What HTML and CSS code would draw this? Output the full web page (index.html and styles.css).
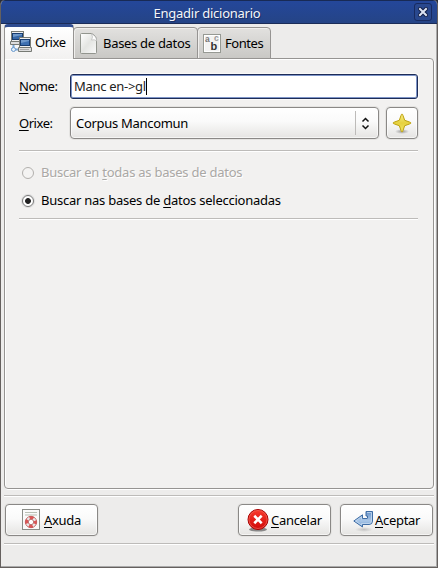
FILE: index.html
```html
<!DOCTYPE html>
<html lang="gl">
<head>
<meta charset="utf-8">
<title>Engadir dicionario</title>
<link rel="stylesheet" href="styles.css">
</head>
<body>
<main class="window">
  <header class="titlebar">
    <h1>Engadir dicionario</h1>
    <button class="close" aria-label="Pechar"><svg width="10" height="10" viewBox="0 0 10 10"><path d="M2 2l6 6M8 2L2 8" stroke="#101d46" stroke-width="4" stroke-linecap="square"/><path d="M2 2l6 6M8 2L2 8" stroke="#dde4f3" stroke-width="2" stroke-linecap="square"/></svg></button>
  </header>
  <nav class="tabs">
    <div class="tab active">
      <svg width="22" height="22" viewBox="0 0 22 22">
        <g stroke="#777a74"><rect x="1.500" y=".5" width="12" height="10" fill="#eee"/><path d="M.5 10.500h13v3H.5z" fill="#ddd"/></g>
        <rect x="2.500" y="2.500" width="10" height="6" fill="#3768a8" stroke="#173c70"/>
        <path d="M3.500 14v3M1 18.500h7" stroke="#79a6d4" stroke-width="2" fill="none"/>
        <circle cx="3.500" cy="18.500" r="2" fill="#e5f1fc" stroke="#6b9acb"/>
        <g stroke="#777a74"><rect x="9.500" y="6.500" width="11" height="10" fill="#eee"/><path d="M8.500 16.500h13v4h-13z" fill="#ddd"/></g>
        <rect x="10.500" y="8.500" width="9" height="6" fill="#3e70b1" stroke="#173c70"/>
        <path d="M11 12l8-2V9h-8zM3 6l9-2V3H3z" fill="#6f99cb"/>
        <path d="M10 18.500h9" stroke="#aaa"/>
      </svg>
      <span>Orixe</span>
    </div>
    <div class="tab bases">
      <svg width="20" height="22" viewBox="0 0 20 22"><defs><linearGradient id="pg" x2="1" y2="1"><stop stop-color="#fff"/><stop offset=".5" stop-color="#e4e5e2"/><stop offset="1" stop-color="#fafafa"/></linearGradient></defs><path d="M2.500.5h10q5 2 5 7v12q0 1-1 1h-14q-1 0-1-1v-18q0-1 1-1z" fill="url(#pg)" stroke="#92958e"/><path d="M12.500 1q2 3 0 6 3-1 5 1 0-5-5-7z" fill="#fff" stroke="#bbb" stroke-width=".7"/></svg>
      <span>Bases de datos</span>
    </div>
    <div class="tab fonts">
      <svg width="18" height="19" viewBox="0 0 18 19"><rect x=".5" y=".5" width="17" height="18" fill="#f3f3f2" stroke="#969993"/><rect x="1.500" y="1.500" width="15" height="16" fill="none" stroke="#fff"/><g class="letters"><text x="2" y="8" fill="#777">a</text><text x="11" y="7" fill="#999">c</text><text x="7.500" y="15.500" class="letter-b">b</text></g></svg>
      <span>Fontes</span>
    </div>
  </nav>
  <section class="panel">
    <div class="row name"><label for="name"><u>N</u>ome:</label><div class="entry" id="name"><span>Manc en-&gt;gl</span><i class="caret"></i></div></div>
    <div class="row source"><label><u>O</u>rixe:</label>
      <div class="button combo"><span>Corpus Mancomun</span><div class="arrows"><svg width="9" height="13" viewBox="0 0 9 13"><path d="M1.500 4.500l3-3 3 3M1.500 8.500l3 3 3-3" fill="none" stroke="#111" stroke-width="1.500"/></svg></div></div>
      <button class="button star"><svg width="22" height="22" viewBox="0 0 22 22"><defs><linearGradient id="st" x2="0" y2="1"><stop stop-color="#f8ef89"/><stop offset=".5" stop-color="#e6d13d"/><stop offset="1" stop-color="#f2e66c"/></linearGradient><radialGradient id="sh"><stop stop-color="#999"/><stop offset="1" stop-color="#999" stop-opacity="0"/></radialGradient></defs><ellipse cx="11" cy="19.500" rx="7" ry="2.500" fill="url(#sh)"/><path d="M11 2q.6 0 1 1.500l1.700 4.800 4.800 1.700q1.500.5 1.500 1t-1.500 1l-4.800 1.700-1.700 4.800q-.4 1.500-1 1.500t-1-1.500l-1.700-4.800L3.500 12Q2 11.500 2 11t1.500-1l4.800-1.700L10 3.500Q10.400 2 11 2z" fill="url(#st)" stroke="#bda10e"/></svg></button>
    </div>
    <hr>
    <div class="radio disabled"><i></i><span>Buscar en <u>t</u>odas as bases de datos</span></div>
    <div class="radio selected"><i></i><span>Buscar nas bases de <u>d</u>atos seleccionadas</span></div>
    <hr class="last">
  </section>
  <footer class="actions">
    <button class="button help"><svg width="18" height="22" viewBox="0 0 18 22"><rect x=".5" y=".5" width="17" height="20" fill="#fafafa" stroke="#8b8d88"/><path d="M3 3.500h12M3 6h12" stroke="#b9bfb4"/><circle cx="9" cy="13" r="4.300" fill="none" stroke="#e8e8e8" stroke-width="3"/><circle cx="9" cy="13" r="4.300" fill="none" stroke="#dc5555" stroke-width="2.800" stroke-dasharray="4 2.754" stroke-dashoffset="2"/><circle cx="9" cy="13" r="5.700" fill="none" stroke="#b44" stroke-width=".7"/><circle cx="9" cy="13" r="2.700" fill="#fff" stroke="#a55" stroke-width=".8"/></svg><span><u>A</u>xuda</span></button>
    <button class="button cancel"><svg width="22" height="23" viewBox="0 0 22 23"><defs><linearGradient id="rd" x2="0" y2="1"><stop stop-color="#fa3a2c"/><stop offset="1" stop-color="#cf0909"/></linearGradient></defs><ellipse cx="11" cy="20.500" rx="9" ry="2" fill="#888"/><circle cx="11" cy="10.500" r="10" fill="url(#rd)" stroke="#a50000"/><circle cx="11" cy="10.500" r="9" fill="none" stroke="#f06458" stroke-width=".7"/><path d="M8.200 7.700l5.600 5.600M13.800 7.700l-5.600 5.600" stroke="#fff" stroke-width="2.600" stroke-linecap="square"/></svg><span><u>C</u>ancelar</span></button>
    <button class="button accept"><svg width="21" height="22" viewBox="0 0 21 22"><defs><linearGradient id="bl" x2="0" y2="1"><stop stop-color="#6692c9"/><stop offset=".6" stop-color="#a9c6e7"/><stop offset="1" stop-color="#739fd1"/></linearGradient></defs><ellipse cx="11" cy="19.500" rx="9" ry="2.500" fill="url(#sh)" opacity=".5"/><path d="M13 1.500h6.500V11q0 3.500-3.500 3.500H9.500V17L.8 11 9.500 4.800v3.700H14q.5 0 .5-.5V6H13z" fill="url(#bl)" stroke="#3e6ca4"/><path d="M14 2.500h4.500V11q0 2.500-2.500 2.500H8.500V15L2.600 11l5.900-4.200v2.700" fill="none" stroke="#c6daf0" stroke-width=".8"/></svg><span><u>A</u>ceptar</span></button>
  </footer>
</main>
</body>
</html>
```
FILE: styles.css
```css
* { box-sizing: border-box; }
body { margin: 0; background: #282d3a; font: 13px/18px "Noto Sans", "Open Sans", sans-serif; letter-spacing: -0.3px; color: #000; }
button { font: inherit; letter-spacing: inherit; color: inherit; padding: 0; margin: 0; }
svg { display: block; flex: none; }
span { white-space: nowrap; }
u { text-decoration: underline; text-decoration-thickness: 1px; text-underline-offset: 2px; text-decoration-skip-ink: none; }
.window { width: 438px; height: 568px; display: flex; flex-direction: column; background: #edeceb; border: 1px solid #65605e; border-top: 0; border-radius: 5px 5px 0 0; overflow: hidden; box-shadow: inset -1px -1px #aaa; }
.titlebar { height: 24px; flex: none; display: flex; align-items: center; margin: 0 -1px; background: linear-gradient(#24479a, #254486); border-top: 1px solid #182a55; border-bottom: 1px solid #1b2c58; color: #f4f6fa; text-shadow: 1px 1px #182f67; }
h1 { flex: 1; margin: 2px 0 0; padding-left: 0; text-align: center; font: inherit; line-height: 20px; letter-spacing: -0.25px; }
.close { width: 18px; height: 18px; display: flex; align-items: center; justify-content: center; border: 1px solid #182b60; border-radius: 3px; background: #29488e; margin: 0 6px 0 0; }
.tabs { display: flex; align-items: flex-end; height: 35px; flex: none; margin-left: 3px; position: relative; z-index: 1; }
.tab { display: flex; align-items: center; height: 32px; border: 1px solid #969492; border-radius: 4px 4px 0 0; background: linear-gradient(#e2e1df, #c9c8c5); margin-left: -1px; box-shadow: inset 1px 1px #f0efed; }
.active { width: 70px; height: 35px; margin-left: 0; padding: 0 0 2px 5px; gap: 3px; background: linear-gradient(#fff, #f2f1f0); border-top: 3px solid #304d91; border-bottom: 0; box-shadow: none; letter-spacing: -0.45px; }
.bases { width: 125px; padding-left: 5px; gap: 4px; }
.bases svg { margin-bottom: -2px; }
.fonts { width: 74px; padding-left: 5px; gap: 4px; letter-spacing: -0.45px; }
.letters { font: bold 8.5px "Liberation Sans", sans-serif; letter-spacing: 0; }
.letter-b { font-size: 11px; fill: #333; }
.panel { width: 430px; height: 431px; flex: none; margin: -1px 0 0 3px; padding: 15px 15px 0 14px; background: #f2f1f0; border: 1px solid #969492; border-radius: 0 4px 4px 4px; box-shadow: inset 0 1px #fff, inset 1px 0 #fff, 1px 1px #fff; }
.row { display: flex; align-items: center; }
.row label { width: 51px; flex: none; letter-spacing: -0.45px; padding-bottom: 1px; }
.name { height: 25px; }
.entry { width: 348px; height: 25px; display: flex; align-items: center; padding-left: 3px; background: #fff; border: 1px solid #1d2c57; border-radius: 3px; box-shadow: inset 0 0 0 1px #7d94c8, 0 0 0 1px #faf9f8; color: #222; }
.entry span { padding-bottom: 1px; }
.caret { width: 1px; height: 17px; background: #000; }
.source { margin-top: 8px; height: 32px; }
.button { display: flex; align-items: center; height: 32px; border: 1px solid #8a8886; border-radius: 4px; background: linear-gradient(#fff, #fafafa 45%, #e5e4e2); box-shadow: inset 0 0 0 1px #ffffff99, 0 0 0 1px #e4e3e1; }
.button span { padding-bottom: 1px; }
.combo { width: 309px; padding-left: 5px; }
.arrows { margin-left: auto; width: 23px; height: 24px; display: flex; align-items: center; border-left: 1px solid #bdbbb9; padding-left: 5px; }
.star { width: 32px; margin-left: 7px; justify-content: center; }
hr { height: 2px; margin: 11px 0 0; border: 0; border-top: 1px solid #bdbbb9; background: #fff; }
.radio { display: flex; align-items: center; height: 28px; padding-left: 3px; gap: 7px; letter-spacing: -0.245px; }
.radio span { padding-bottom: 2px; }
.radio i { width: 12px; height: 12px; border-radius: 50%; border: 1px solid #777; background: #fff; flex: none; box-shadow: 0 0 0 1px #ddd; }
.disabled { color: #aaa8a5; text-shadow: 1px 1px #fff; margin-top: 7px; }
.disabled i { border-color: #b2b0ad; background: #f4f3f2; box-shadow: none; }
.selected i { background: radial-gradient(circle, #222 0 2.500px, #fff 3.300px); }
hr.last { margin-top: 3px; }
.actions { display: flex; width: 430px; height: 49px; margin: 6px 0 0 3px; padding: 8px 1px 0; border: solid #bdbbb9; border-width: 1px 0; box-shadow: inset 0 1px #fff, 0 1px #fff; }
.help { width: 93px; padding-left: 16px; gap: 4px; }
.cancel { width: 93px; margin-left: auto; padding-left: 8px; gap: 2px; }
.accept { width: 93px; margin-left: 9px; padding-left: 12px; gap: 1px; }
.accept svg { margin-bottom: -1px; }
```
